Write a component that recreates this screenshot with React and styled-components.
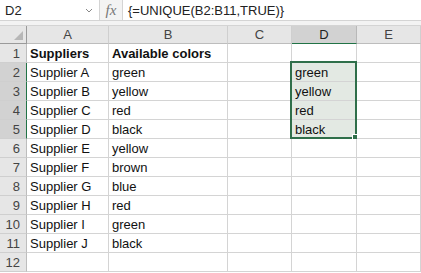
import styled, { createGlobalStyle } from "styled-components";

const GlobalStyle = createGlobalStyle`
    body {
        margin: 0;
        background: #ffffff;
        font-family: "Liberation Sans", Arial, sans-serif;
    }
`;

const Sheet = styled.div`
    width: 421px;
    height: 273px;
    overflow: hidden;
    background: #ffffff;
    display: flex;
    flex-direction: column;
`;

const FormulaBar = styled.div`
    display: flex;
    height: 21px;
    border-bottom: 1px solid #d4d4d4;
    box-sizing: border-box;
    background: #ffffff;
`;

const NameBox = styled.div`
    width: 100px;
    display: flex;
    align-items: center;
    justify-content: space-between;
    padding: 0 6px 0 5px;
    box-sizing: border-box;
    border-right: 1px solid #d4d4d4;
    font-size: 13px;
    color: #222;
`;

const FxBox = styled.div`
    width: 22px;
    display: flex;
    align-items: center;
    justify-content: center;
    border-right: 1px solid #d4d4d4;
    background: #f3f3f3;
    font-family: "Liberation Serif", serif;
    font-style: italic;
    font-size: 15px;
    color: #777;
`;

const FormulaText = styled.div`
    display: flex;
    align-items: center;
    padding-left: 5px;
    font-size: 13px;
    color: #222;
`;

const Gap = styled.div`
    height: 4px;
    background: #f3f3f3;
    border-bottom: 1px solid #d4d4d4;
`;

const Grid = styled.div`
    display: grid;
    grid-template-columns: 27px 82px 119px 64px 65px 64px;
    grid-template-rows: 18px;
    grid-auto-rows: 19px;
    font-size: 13px;
`;

const ColHead = styled.div`
    display: flex;
    align-items: center;
    justify-content: center;
    box-sizing: border-box;
    background: ${(p) => (p.$active ? "#d2d2d2" : "#e6e6e6")};
    border-right: 1px solid ${(p) => (p.$active ? "#b8b8b8" : "#cfcfcf")};
    border-bottom: 1px solid ${(p) => (p.$active ? "#217346" : "#bdbdbd")};
    color: ${(p) => (p.$active ? "#222" : "#444")};
    font-size: 13px;
`;

const Corner = styled(ColHead)`
    position: relative;
    border-right: 1px solid #9a9a9a;
    border-bottom: 1px solid #9a9a9a;

    &::after {
        content: "";
        position: absolute;
        right: 3px;
        bottom: 3px;
        border-style: solid;
        border-width: 0 0 9px 9px;
        border-color: transparent transparent #b7b7b7 transparent;
    }
`;

const RowHead = styled.div`
    display: flex;
    align-items: center;
    justify-content: flex-end;
    padding-right: 6px;
    box-sizing: border-box;
    background: ${(p) => (p.$active ? "#d2d2d2" : "#e6e6e6")};
    border-right: 1px solid ${(p) => (p.$active ? "#217346" : "#bdbdbd")};
    border-bottom: 1px solid #cfcfcf;
    color: #444;
`;

const Cell = styled.div`
    position: relative;
    display: flex;
    align-items: center;
    padding-left: 3px;
    box-sizing: border-box;
    white-space: nowrap;
    border-right: 1px solid #d4d4d4;
    border-bottom: 1px solid #d4d4d4;
    background: ${(p) => (p.$sel ? "#e3e9e3" : "#ffffff")};
    font-weight: ${(p) => (p.$bold ? "bold" : "normal")};
    color: #111;
`;

const SelectionBox = styled.div`
    position: absolute;
    left: -2px;
    right: -1px;
    top: ${(p) => (p.$top ? "-2px" : "-1px")};
    bottom: -1px;
    border-left: 2px solid #2f6f4a;
    border-right: 2px solid #2f6f4a;
    border-top: ${(p) => (p.$top ? "2px solid #2f6f4a" : "none")};
    border-bottom: ${(p) => (p.$bottom ? "2px solid #2f6f4a" : "none")};
    pointer-events: none;
`;

const Handle = styled.div`
    position: absolute;
    right: -4px;
    bottom: -4px;
    width: 6px;
    height: 6px;
    background: #2f6f4a;
    border: 1px solid #ffffff;
`;

const cols = ["A", "B", "C", "D", "E"];

const data = [
    ["Suppliers", "Available colors"],
    ["Supplier A", "green"],
    ["Supplier B", "yellow"],
    ["Supplier C", "red"],
    ["Supplier D", "black"],
    ["Supplier E", "yellow"],
    ["Supplier F", "brown"],
    ["Supplier G", "blue"],
    ["Supplier H", "red"],
    ["Supplier I", "green"],
    ["Supplier J", "black"],
    ["", ""],
];

const unique = { 2: "green", 3: "yellow", 4: "red", 5: "black" };

const App = () => {
    return (
        <Sheet>
            <GlobalStyle />
            <FormulaBar>
                <NameBox>
                    <span>D2</span>
                    <svg width="8" height="5" viewBox="0 0 8 5">
                        <path d="M1 1 L4 4 L7 1" fill="none" stroke="#888" strokeWidth="1" />
                    </svg>
                </NameBox>
                <FxBox>fx</FxBox>
                <FormulaText>{"{=UNIQUE(B2:B11,TRUE)}"}</FormulaText>
            </FormulaBar>
            <Gap />
            <Grid>
                <Corner />
                {cols.map((c) => (
                    <ColHead key={c} $active={c === "D"}>{c}</ColHead>
                ))}
                {data.map((row, i) => {
                    const n = i + 1;
                    const sel = unique[n] !== undefined;
                    return [
                        <RowHead key={`h${n}`} $active={sel}>{n}</RowHead>,
                        <Cell key={`a${n}`} $bold={n === 1}>{row[0]}</Cell>,
                        <Cell key={`b${n}`} $bold={n === 1}>{row[1]}</Cell>,
                        <Cell key={`c${n}`} />,
                        <Cell key={`d${n}`} $sel={sel}>
                            {unique[n]}
                            {sel && <SelectionBox $top={n === 2} $bottom={n === 5} />}
                            {n === 5 && <Handle />}
                        </Cell>,
                        <Cell key={`e${n}`} />,
                    ];
                })}
            </Grid>
        </Sheet>
    );
};

export default App;
